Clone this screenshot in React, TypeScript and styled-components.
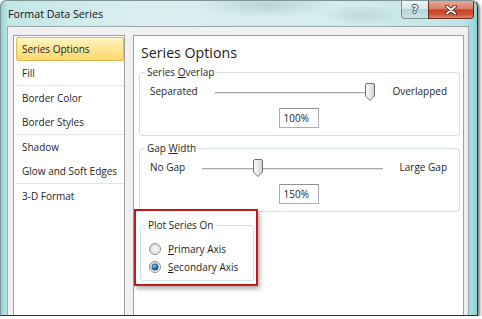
import * as React from 'react'
import styled, { createGlobalStyle } from 'styled-components'

const GlobalStyle = createGlobalStyle`
html, body {
    margin: 0;
    padding: 0;
    background: #fff;
}
body {
    font-family: "Open Sans", "Noto Sans", sans-serif;
    color: #1e1e1e;
}
`

const Window = styled.div`
    width: 478px;
    height: 316px;
    box-sizing: border-box;
    display: flex;
    flex-direction: column;
    padding: 0 8px 0 6px;
    overflow: hidden;

    border: 1px solid #7d9496;
    border-right-color: #2e2e2e;
    border-bottom-color: #2e2e2e;
    border-radius: 6px 6px 0 0;
    box-shadow: 2px 2px 3px rgba(0, 0, 0, 0.5);
    background:
        radial-gradient(ellipse 70px 12px at 265px 4px, rgba(110, 140, 150, 0.28), transparent),
        radial-gradient(ellipse 40px 10px at 360px 14px, rgba(110, 140, 150, 0.18), transparent),
        linear-gradient(90deg, #8ed3d4 0px, #c4e6e7 7px, #dbefef 30%, #d4eded 70%, #c2e4e5 97%, #8ad5d7 100%);
`

const TitleBar = styled.div`
    display: flex;
    align-items: flex-start;
    height: 25px;
    margin-right: -5px;
    flex: none;
`

const Title = styled.div`
    padding: 5px 0 0 1px;
    font-size: 10.7px;
    line-height: 16px;
    color: #111;
`

const CaptionButtons = styled.div`
    margin-left: auto;
    display: flex;
`

const HelpButton = styled.div`
    width: 27px;
    height: 18px;
    box-sizing: border-box;
    display: flex;
    align-items: center;
    justify-content: center;
    border: 1px solid rgba(70, 95, 105, 0.65);
    border-top: none;
    border-right: none;
    border-radius: 0 0 0 4px;
    background: linear-gradient(#eef6f7 0%, #d4e7e9 45%, #b7d3d7 50%, #c9e2e5 100%);
    font-family: "DejaVu Sans", sans-serif;
    font-weight: bold;
    font-size: 11px;
    color: #fff;
    text-shadow: 1px 0 0 #3c4b55, -1px 0 0 #3c4b55, 0 1px 0 #3c4b55, 0 -1px 0 #3c4b55;
`

const CloseButton = styled.div`
    width: 46px;
    height: 18px;
    box-sizing: border-box;
    display: flex;
    align-items: center;
    justify-content: center;
    border: 1px solid #6b2a1f;
    border-top: none;
    border-radius: 0 0 4px 0;
    background: linear-gradient(#e9a898 0%, #d97f6a 45%, #c5432a 52%, #cf5337 80%, #e2896b 100%);
`

const Client = styled.div`
    flex: none;
    height: 289px;
    box-sizing: border-box;
    display: flex;
    align-items: flex-start;
    gap: 8px;
    padding: 8px 4px 0 5px;
    overflow: hidden;
    background: #f0f0f0;
    border: 1px solid #9aa6ae;
    border-bottom: none;
`

const CategoryList = styled.div`
    width: 112px;
    height: 300px;
    box-sizing: border-box;
    flex: none;
    padding: 1px 0 0 2px;
    background: #fff;
    border: 1px solid #a0a0a0;
`

const ListItem = styled.div<{ $selected?: boolean }>`
    height: 24px;
    box-sizing: border-box;
    display: flex;
    align-items: center;
    padding-left: 5px;
    font-size: 10px;
    color: #1e1e1e;
    border: 1px solid ${p => p.$selected ? '#e0b84e' : 'transparent'};
    border-radius: 2px;
    background: ${p => p.$selected ? 'linear-gradient(#fff4c6 0%, #fde79a 45%, #fcd868 100%)' : 'none'};
`

const Separator = styled.div`
    height: 1px;
    background: #e6e6e6;
`

const Panel = styled.div`
    flex: 1;
    height: 300px;
    box-sizing: border-box;
    display: flex;
    flex-direction: column;
    padding: 7px 3px 0 5px;
    background: #fff;
    border: 1px solid #a0a0a0;
`

const Heading = styled.div`
    margin: 0 0 2px 2px;
    font-size: 14.2px;
    line-height: 20px;
    color: #1b1b1b;
`

const Group = styled.fieldset<{ $width?: number }>`
    margin: 0;
    padding: 0;
    min-width: 0;
    width: ${p => p.$width ? `${p.$width}px` : 'auto'};
    box-sizing: border-box;
    border: 1px solid #d3dee5;
    border-radius: 3px;

    & + & {
        margin-top: 5px;
    }
`

const Legend = styled.legend`
    margin-left: 5px;
    padding: 0 2px;
    font-size: 10px;
    line-height: 14px;
    color: #1e1e1e;
`

const SliderBody = styled.div`
    display: flex;
    flex-direction: column;
    align-items: center;
    padding: 3px 12px 7px 10px;
`

const SliderRow = styled.div`
    align-self: stretch;
    display: flex;
    align-items: center;
    gap: 17px;
    height: 18px;
    font-size: 10px;
`

const SliderLabel = styled.span`
    flex: none;
    white-space: nowrap;
`

const Track = styled.div`
    position: relative;
    flex: 1;
    height: 1px;
    margin-top: 4px;
    background: #a8a8a8;
    border-bottom: 1px solid #e4e4e4;
`

const Thumb = styled.svg`
    position: absolute;
    top: -9px;
    width: 10px;
    height: 18px;
`

const ValueBox = styled.div`
    margin-top: 8px;
    width: 40px;
    height: 20px;
    box-sizing: border-box;
    padding-left: 4px;
    display: flex;
    align-items: center;
    font-size: 10px;
    background: #fff;
    border: 1px solid #abadb3;
    border-top-color: #8e9199;
`

const Highlight = styled.div`
    align-self: flex-start;
    margin: -3px 0 0 -5px;
    padding: 7px 2px 3px 4px;
    border: 2px solid #c8161d;
    box-shadow: 2px 3px 4px rgba(0, 0, 0, 0.3);
    background: #fff;
`

const RadioBody = styled.div`
    padding: 8px 0 4px 8px;
`

const RadioRow = styled.div`
    display: flex;
    align-items: center;
    gap: 7px;
    height: 18px;
    font-size: 10px;
`

const Key = styled.u`
    text-underline-offset: 1px;
`

function SliderThumb({ left }: { left: string }) {
    return (
        <Thumb viewBox="0 0 10 18" style={{ left }}>
            <defs>
                <linearGradient id="thumbFill" x1="0" y1="0" x2="1" y2="0">
                    <stop offset="0" stopColor="#fbfbfb" />
                    <stop offset="0.5" stopColor="#e9e9e9" />
                    <stop offset="1" stopColor="#cfcfcf" />
                </linearGradient>
            </defs>
            <path d="M2 0.5 H8 A1.5 1.5 0 0 1 9.5 2 V13 L5 17.5 L0.5 13 V2 A1.5 1.5 0 0 1 2 0.5 Z"
                fill="url(#thumbFill)" stroke="#717171" strokeWidth="1" />
        </Thumb>
    )
}

function Slider({ min, max, value }: { min: number, max: number, value: number }) {
    const pct = (value - min) / (max - min)
    return (
        <Track>
            <SliderThumb left={`calc(${pct} * (100% - 10px))`} />
        </Track>
    )
}

function Radio({ checked }: { checked?: boolean }) {
    return (
        <svg width="12" height="12" viewBox="0 0 12 12">
            <defs>
                <linearGradient id="radioRing" x1="0" y1="0" x2="1" y2="1">
                    <stop offset="0" stopColor="#d6d6d6" />
                    <stop offset="1" stopColor="#fafafa" />
                </linearGradient>
                <radialGradient id="radioDot" cx="0.4" cy="0.35" r="0.7">
                    <stop offset="0" stopColor="#8fd3f6" />
                    <stop offset="0.45" stopColor="#2b86c4" />
                    <stop offset="1" stopColor="#0b3e66" />
                </radialGradient>
            </defs>
            <circle cx="6" cy="6" r="5.5" fill="url(#radioRing)" stroke="#8d8d8d" strokeWidth="1" />
            <circle cx="6" cy="6" r="3.6" fill="#f3f3f3" stroke="#d8d8d8" strokeWidth="0.6" />
            {checked && <circle cx="6" cy="6" r="3.2" fill="url(#radioDot)" stroke="#1b4f74" strokeWidth="0.5" />}
        </svg>
    )
}

const categories = [
    ['Series Options', 'Fill'],
    ['Border Color', 'Border Styles'],
    ['Shadow', 'Glow and Soft Edges'],
    ['3-D Format'],
]

export default function App() {
    return (
        <>
            <GlobalStyle />
            <Window>
                <TitleBar>
                    <Title>Format Data Series</Title>
                    <CaptionButtons>
                        <HelpButton>?</HelpButton>
                        <CloseButton>
                            <svg width="12" height="10" viewBox="0 0 12 10">
                                <path d="M2 1.5 L10 8.5 M10 1.5 L2 8.5" stroke="#3b1a14" strokeWidth="3.6" strokeLinecap="round" />
                                <path d="M2 1.5 L10 8.5 M10 1.5 L2 8.5" stroke="#fff" strokeWidth="2" strokeLinecap="round" />
                            </svg>
                        </CloseButton>
                    </CaptionButtons>
                </TitleBar>

                <Client>
                    <CategoryList>
                        {categories.map((group, gi) => (
                            <React.Fragment key={gi}>
                                {gi > 0 && <Separator />}
                                {group.map(name => (
                                    <ListItem key={name} $selected={name === 'Series Options'}>{name}</ListItem>
                                ))}
                            </React.Fragment>
                        ))}
                    </CategoryList>

                    <Panel>
                        <Heading>Series Options</Heading>

                        <Group>
                            <Legend>Series <Key>O</Key>verlap</Legend>
                            <SliderBody>
                                <SliderRow>
                                    <SliderLabel>Separated</SliderLabel>
                                    <Slider min={-100} max={100} value={100} />
                                    <SliderLabel>Overlapped</SliderLabel>
                                </SliderRow>
                                <ValueBox>100%</ValueBox>
                            </SliderBody>
                        </Group>

                        <Group>
                            <Legend>Gap <Key>W</Key>idth</Legend>
                            <SliderBody>
                                <SliderRow>
                                    <SliderLabel>No Gap</SliderLabel>
                                    <Slider min={0} max={500} value={150} />
                                    <SliderLabel>Large Gap</SliderLabel>
                                </SliderRow>
                                <ValueBox>150%</ValueBox>
                            </SliderBody>
                        </Group>

                        <Highlight>
                            <Group $width={114}>
                                <Legend>Plot Series On</Legend>
                                <RadioBody>
                                    <RadioRow>
                                        <Radio />
                                        <span><Key>P</Key>rimary Axis</span>
                                    </RadioRow>
                                    <RadioRow>
                                        <Radio checked />
                                        <span><Key>S</Key>econdary Axis</span>
                                    </RadioRow>
                                </RadioBody>
                            </Group>
                        </Highlight>
                    </Panel>
                </Client>
            </Window>
        </>
    )
}
